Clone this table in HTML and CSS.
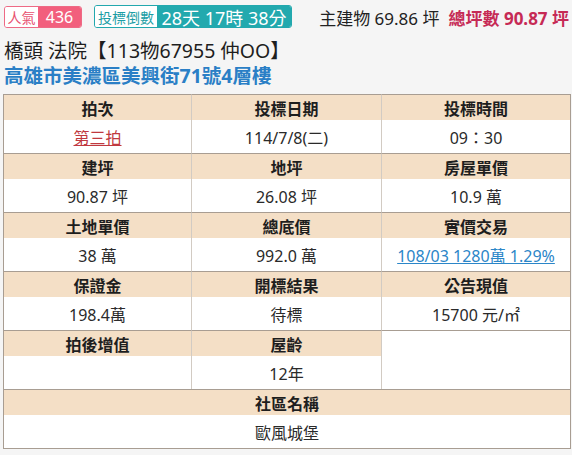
FILE: index.html
```html
<!DOCTYPE html>
<html lang="zh-Hant">
<head>
<meta charset="utf-8">
<link rel="stylesheet" href="styles.css">
</head>
<body>
<div class="top">
  <div class="badge pop"><span class="lbl">人氣</span><span class="val">436</span></div>
  <div class="badge cd"><span class="lbl">投標倒數</span><span class="val">28天 17時 38分</span></div>
  <div class="area"><span class="main">主建物 69.86 坪</span><span class="total">總坪數 90.87 坪</span></div>
</div>
<h1 class="title">橋頭 法院【113物67955 仲OO】</h1>
<div class="addr">高雄市美濃區美興街71號4層樓</div>
<div class="table">
  <div class="h">拍次</div><div class="h">投標日期</div><div class="h last">投標時間</div>
  <div class="v"><a class="red">第三拍</a></div><div class="v">114/7/8(二)</div><div class="v last">09：30</div>

  <div class="h">建坪</div><div class="h">地坪</div><div class="h last">房屋單價</div>
  <div class="v">90.87 坪</div><div class="v">26.08 坪</div><div class="v last">10.9 萬</div>

  <div class="h">土地單價</div><div class="h">總底價</div><div class="h last">實價交易</div>
  <div class="v">38 萬</div><div class="v">992.0 萬</div><div class="v last"><a class="blue">108/03 1280萬 1.29%</a></div>

  <div class="h">保證金</div><div class="h">開標結果</div><div class="h last">公告現值</div>
  <div class="v">198.4萬</div><div class="v">待標</div><div class="v last">15700 元/㎡</div>

  <div class="h">拍後增值</div><div class="h">屋齡</div><div class="empty"></div>
  <div class="v"></div><div class="v">12年</div>

  <div class="h full">社區名稱</div>
  <div class="v full">歐風城堡</div>
</div>
</body>
</html>
```
FILE: styles.css
```css
* { box-sizing: border-box; }
body {
  margin: 0;
  background: #f5f5f5;
  font-family: "Noto Sans", "Noto Sans CJK TC", sans-serif;
  color: #222;
  width: 572px;
  height: 455px;
  overflow: hidden;
}
.top {
  display: flex;
  align-items: center;
  padding: 5px 3px 0 4px;
  height: 28px;
}
.badge {
  display: flex;
  align-items: stretch;
  border-radius: 3px;
  overflow: hidden;
}
.badge .lbl {
  display: flex;
  align-items: center;
  background: #fff;
  font-size: 14px;
  font-family: "Noto Sans CJK TC", sans-serif;
}
.badge .val {
  display: flex;
  align-items: center;
  color: #fff;
}
.pop {
  height: 22px;
  width: 78px;
  border: 1px solid #ee6a85;
}
.pop .lbl { color: #e8506f; width: 33px; justify-content: center; }
.pop .val { background: #f25f7d; font-size: 16px; flex: 1; justify-content: center; }
.cd {
  margin-left: 12px;
  height: 23px;
  width: 198px;
  border: 1px solid #22a8ae;
}
.cd .lbl { color: #1c9ea5; width: 62px; justify-content: center; }
.cd .val { background: #22a9ae; font-size: 18px; flex: 1; justify-content: center; }
.area {
  margin-left: auto;
  display: flex;
  gap: 9px;
  font-size: 17px;
  white-space: nowrap;
  padding-top: 1px;
}
.main { color: #222; }
.total { color: #c62a55; font-weight: bold; }
.title {
  margin: 10px 0 0 4px;
  font-size: 19.5px;
  font-weight: normal;
  line-height: 26px;
  color: #1e1e1e;
  white-space: nowrap;
}
.addr {
  margin: 0 0 0 4px;
  font-size: 19.5px;
  font-weight: bold;
  line-height: 24px;
  color: #2a7fc6;
  white-space: nowrap;
}
.table {
  margin: 6px 0 0 3px;
  width: 568px;
  border-left: 1px solid #a89d92;
  border-right: 1px solid #a89d92;
  border-bottom: 1px solid #a89d92;
  padding-right: 1px;
  display: grid;
  grid-template-columns: 188px 190px 188px;
}
.h, .v {
  display: flex;
  align-items: center;
  justify-content: center;
  font-size: 16px;
  border-right: 1px solid #d2cbc3;
}
.h {
  height: 26px;
  background: #f4dfc6;
  font-weight: bold;
  border-top: 1px solid #a89d92;
  color: #1e1e1e;
}
.v {
  height: 33px;
  background: #fff;
  color: #2a2a2a;
}
.last { border-right: none; }
.full { grid-column: 1 / 4; border-right: none; }
.empty {
  grid-row: span 2;
  background: #fff;
  border-top: 1px solid #a89d92;
}
a { text-decoration: underline; cursor: pointer; }
a.red { color: #c0393f; text-decoration-color: #c0393f; }
a.blue { color: #2b86c8; }
```
